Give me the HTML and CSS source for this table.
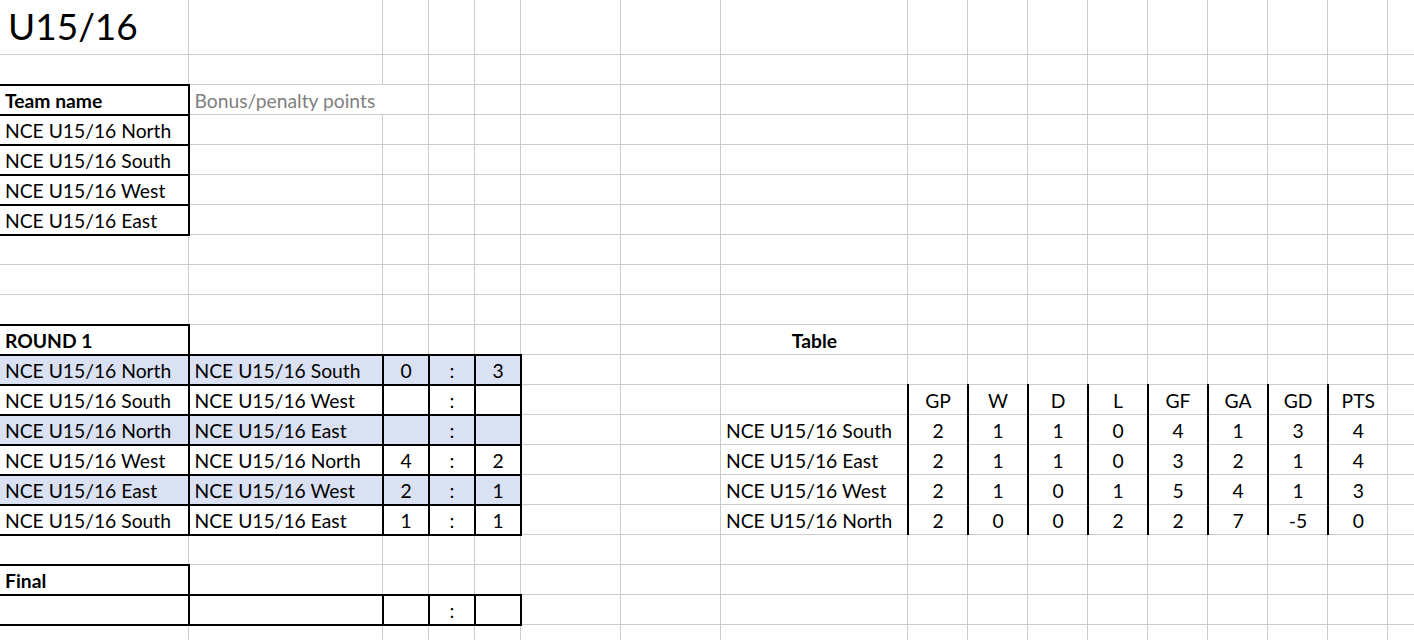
FILE: index.html
```html
<!DOCTYPE html>
<html>
<head>
<meta charset="utf-8">
<title>U15/16</title>
<link rel="stylesheet" href="styles.css">
</head>
<body>
<table class="sheet">
<colgroup>
<col class="w-a"><col class="w-b"><col class="w-s"><col class="w-s"><col class="w-s"><col class="w-m"><col class="w-m"><col class="w-h">
<col class="w-n"><col class="w-n"><col class="w-n"><col class="w-n"><col class="w-n"><col class="w-n"><col class="w-n"><col class="w-n"><col class="w-n">
</colgroup>
<tr class="r-title"><td class="title">U15/16</td><td></td><td></td><td></td><td></td><td></td><td></td><td></td><td></td><td></td><td></td><td></td><td></td><td></td><td></td><td></td><td></td></tr>
<tr><td></td><td></td><td></td><td></td><td></td><td></td><td></td><td></td><td></td><td></td><td></td><td></td><td></td><td></td><td></td><td></td><td></td></tr>
<tr><td class="bold bt br bb">Team name</td><td colspan="2" class="muted">Bonus/penalty points</td><td></td><td></td><td></td><td></td><td></td><td></td><td></td><td></td><td></td><td></td><td></td><td></td><td></td><td></td></tr>
<tr><td class="br bb">NCE U15/16 North</td><td></td><td></td><td></td><td></td><td></td><td></td><td></td><td></td><td></td><td></td><td></td><td></td><td></td><td></td><td></td><td></td></tr>
<tr><td class="br bb">NCE U15/16 South</td><td></td><td></td><td></td><td></td><td></td><td></td><td></td><td></td><td></td><td></td><td></td><td></td><td></td><td></td><td></td><td></td></tr>
<tr><td class="br bb">NCE U15/16 West</td><td></td><td></td><td></td><td></td><td></td><td></td><td></td><td></td><td></td><td></td><td></td><td></td><td></td><td></td><td></td><td></td></tr>
<tr><td class="br bb">NCE U15/16 East</td><td></td><td></td><td></td><td></td><td></td><td></td><td></td><td></td><td></td><td></td><td></td><td></td><td></td><td></td><td></td><td></td></tr>
<tr><td></td><td></td><td></td><td></td><td></td><td></td><td></td><td></td><td></td><td></td><td></td><td></td><td></td><td></td><td></td><td></td><td></td></tr>
<tr><td></td><td></td><td></td><td></td><td></td><td></td><td></td><td></td><td></td><td></td><td></td><td></td><td></td><td></td><td></td><td></td><td></td></tr>
<tr><td></td><td></td><td></td><td></td><td></td><td></td><td></td><td></td><td></td><td></td><td></td><td></td><td></td><td></td><td></td><td></td><td></td></tr>
<tr><td class="bold bt br">ROUND 1</td><td></td><td></td><td></td><td></td><td></td><td></td><td class="bold c">Table</td><td></td><td></td><td></td><td></td><td></td><td></td><td></td><td></td><td></td></tr>
<tr class="blue"><td class="box">NCE U15/16 North</td><td class="box">NCE U15/16 South</td><td class="box c">0</td><td class="box c">:</td><td class="box c">3</td><td></td><td></td><td></td><td></td><td></td><td></td><td></td><td></td><td></td><td></td><td></td><td></td></tr>
<tr><td class="box">NCE U15/16 South</td><td class="box">NCE U15/16 West</td><td class="box c"></td><td class="box c">:</td><td class="box c"></td><td></td><td></td><td></td><td class="bl c">GP</td><td class="bl c">W</td><td class="bl c">D</td><td class="bl c">L</td><td class="bl c">GF</td><td class="bl c">GA</td><td class="bl c">GD</td><td class="bl c">PTS</td><td></td></tr>
<tr class="blue"><td class="box">NCE U15/16 North</td><td class="box">NCE U15/16 East</td><td class="box c"></td><td class="box c">:</td><td class="box c"></td><td></td><td></td><td>NCE U15/16 South</td><td class="bl c">2</td><td class="bl c">1</td><td class="bl c">1</td><td class="bl c">0</td><td class="bl c">4</td><td class="bl c">1</td><td class="bl c">3</td><td class="bl c">4</td><td></td></tr>
<tr><td class="box">NCE U15/16 West</td><td class="box">NCE U15/16 North</td><td class="box c">4</td><td class="box c">:</td><td class="box c">2</td><td></td><td></td><td>NCE U15/16 East</td><td class="bl c">2</td><td class="bl c">1</td><td class="bl c">1</td><td class="bl c">0</td><td class="bl c">3</td><td class="bl c">2</td><td class="bl c">1</td><td class="bl c">4</td><td></td></tr>
<tr class="blue"><td class="box">NCE U15/16 East</td><td class="box">NCE U15/16 West</td><td class="box c">2</td><td class="box c">:</td><td class="box c">1</td><td></td><td></td><td>NCE U15/16 West</td><td class="bl c">2</td><td class="bl c">1</td><td class="bl c">0</td><td class="bl c">1</td><td class="bl c">5</td><td class="bl c">4</td><td class="bl c">1</td><td class="bl c">3</td><td></td></tr>
<tr><td class="box">NCE U15/16 South</td><td class="box">NCE U15/16 East</td><td class="box c">1</td><td class="box c">:</td><td class="box c">1</td><td></td><td></td><td>NCE U15/16 North</td><td class="bl c">2</td><td class="bl c">0</td><td class="bl c">0</td><td class="bl c">2</td><td class="bl c">2</td><td class="bl c">7</td><td class="bl c">-5</td><td class="bl c">0</td><td></td></tr>
<tr><td></td><td></td><td></td><td></td><td></td><td></td><td></td><td></td><td></td><td></td><td></td><td></td><td></td><td></td><td></td><td></td><td></td></tr>
<tr><td class="bold bt br">Final</td><td></td><td></td><td></td><td></td><td></td><td></td><td></td><td></td><td></td><td></td><td></td><td></td><td></td><td></td><td></td><td></td></tr>
<tr><td class="box"></td><td class="box"></td><td class="box c"></td><td class="box c">:</td><td class="box c"></td><td></td><td></td><td></td><td></td><td></td><td></td><td></td><td></td><td></td><td></td><td></td><td></td></tr>
<tr><td></td><td></td><td></td><td></td><td></td><td></td><td></td><td></td><td></td><td></td><td></td><td></td><td></td><td></td><td></td><td></td><td></td></tr>
</table>
</body>
</html>
```

FILE: styles.css
```css
html, body {
  margin: 0;
  padding: 0;
  background: #ffffff;
  overflow: hidden;
}

body {
  font-family: Lato, "Liberation Sans", sans-serif;
  font-size: 19.3px;
  color: #000000;
}

.sheet {
  border-collapse: collapse;
  table-layout: fixed;
  width: 1447px;
  margin-top: -1px;
  margin-left: -1px;
}

.w-a { width: 189px; }
.w-b { width: 194px; }
.w-s { width: 46px; }
.w-m { width: 100px; }
.w-h { width: 187px; }
.w-n { width: 60px; }

.sheet tr {
  height: 30px;
}

.sheet tr.r-title {
  height: 55px;
}

.sheet td {
  border: 1px solid #cccccc;
  padding: 0 4px 1px 5px;
  vertical-align: bottom;
  white-space: nowrap;
  overflow: visible;
  line-height: 24px;
}

.sheet td:first-child {
  border-left: 1px solid #ffffff !important;
}

.sheet td.title {
  font-size: 37px;
  line-height: 44px;
  padding-left: 8px;
  padding-bottom: 6px;
}

.bold { font-weight: 700; }
.muted { color: #7f7f7f; }
.c { text-align: center; }

.bt { border-top: 2px solid #000 !important; }
.br { border-right: 2px solid #000 !important; }
.bb { border-bottom: 2px solid #000 !important; }
.bl { border-left: 2px solid #000 !important; }
.box { border: 2px solid #000 !important; }

.blue td.box {
  background: #d9e1f2;
}
```
